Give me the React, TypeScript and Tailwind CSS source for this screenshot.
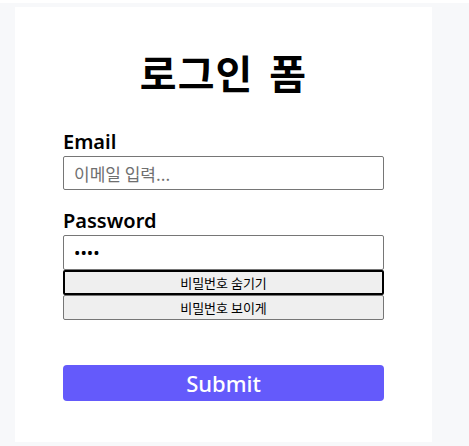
import { useState } from "react";

export default function App() {
  const [show, setShow] = useState(false);
  const font = { fontFamily: '"Noto Sans", "Noto Sans CJK KR", sans-serif' };

  return (
    <div className="min-h-screen bg-white pt-[3px]" style={font}>
      <div className="bg-[#f7f8fa] pl-[15px] pt-[4px] pb-[4px] w-full">
        <div className="w-[417px] h-[435px] bg-white px-12 pt-[38px]">
          <h1 className="text-center text-[40px] leading-[54px] font-bold tracking-[1px] [word-spacing:6px] text-black [font-family:'Noto_Sans_CJK_KR',sans-serif]">로그인 폼</h1>

          <form className="mt-[30px] flex flex-col" onSubmit={(e) => e.preventDefault()}>
            <label className="text-[20px] leading-[26px] font-semibold text-black">Email</label>
            <input
              type="email"
              placeholder="이메일 입력..."
              className="mt-[1px] h-[34px] w-full rounded-[2px] border border-[#767676] px-[10px] text-[17px] placeholder:text-[#6f6f6f] outline-none [font-family:'Noto_Sans_CJK_KR',sans-serif]"
            />

            <label className="mt-[18px] text-[20px] leading-[26px] font-semibold text-black">Password</label>
            <input
              type={show ? "text" : "password"}
              defaultValue="1234"
              className="mt-[1px] h-[35px] w-full rounded-[2px] border border-[#767676] px-[10px] text-[17px] outline-none"
            />
            <button
              type="button"
              onClick={() => setShow(false)}
              className="h-[25px] w-full rounded-[2px] border-2 border-black bg-[#efefef] text-[13px] leading-none text-black [font-family:'Noto_Sans_CJK_KR',sans-serif]"
            >
              비밀번호 숨기기
            </button>
            <button
              type="button"
              onClick={() => setShow(true)}
              className="h-[25px] w-full rounded-[2px] border border-[#767676] bg-[#efefef] text-[13px] leading-none text-black [font-family:'Noto_Sans_CJK_KR',sans-serif]"
            >
              비밀번호 보이게
            </button>

            <button
              type="submit"
              className="mt-[45px] h-[36px] w-full rounded-[4px] bg-[#645afb] text-[22px] leading-none font-medium text-white"
            >
              Submit
            </button>
          </form>
        </div>
      </div>
    </div>
  );
}
